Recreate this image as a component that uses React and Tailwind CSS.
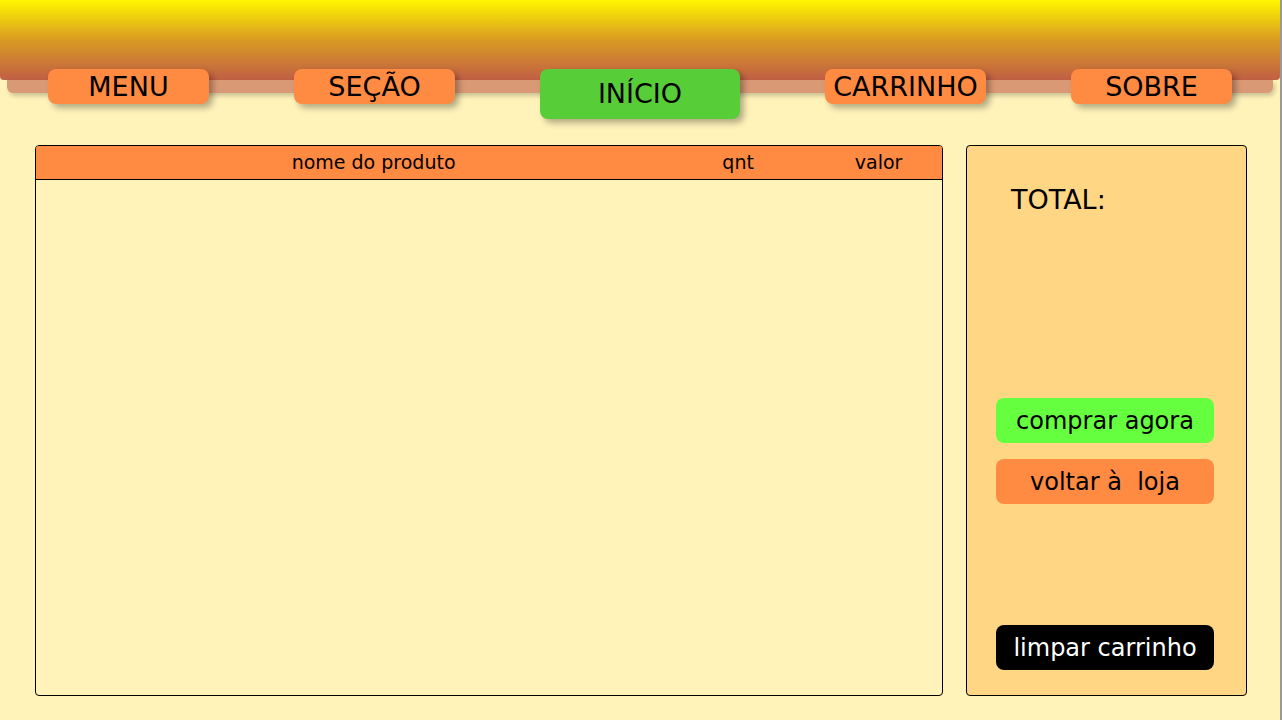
const links = [
  { label: "MENU", href: "#menu" },
  { label: "SEÇÃO", href: "#secao" },
  { label: "INÍCIO", href: "#inicio", home: true },
  { label: "CARRINHO", href: "#carrinho" },
  { label: "SOBRE", href: "#sobre" },
];

function NavLink({ label, href, home }) {
  const look = home ? "h-[50px] w-[200px] bg-[#57cd38]" : "h-[35px] w-[161px] bg-[#ff8a42]";
  return (
    <a
      href={href}
      className={`${look} flex items-center justify-center rounded-lg text-[27px] leading-8 shadow-[4px_4px_6px_rgba(0,0,0,0.3)]`}
    >
      {label}
    </a>
  );
}

function Header() {
  return (
    <header>
      <div className="h-20 rounded-b bg-linear-to-b/srgb from-[#fff700] via-[#d99a22] to-[#c05f45]" />
      <div className="mx-[7px] h-[13px] rounded-b-md bg-[#da9975] shadow-[2px_3px_4px_rgba(0,0,0,0.2)]" />
      <nav className="relative -mt-6 flex items-start justify-between px-12">
        {links.map((link) => (
          <NavLink key={link.label} {...link} />
        ))}
      </nav>
    </header>
  );
}

function CartTable() {
  return (
    <section className="flex-1 overflow-hidden rounded border border-black">
      <table className="w-full table-fixed border-collapse">
        <thead>
          <tr className="h-[33px] border-b border-black bg-[#ff8a42] text-[19px] leading-6">
            <th scope="col" className="w-[69%] pl-[50px] font-normal">nome do produto</th>
            <th scope="col" className="w-[17%] font-normal">qnt</th>
            <th scope="col" className="w-[14%] font-normal">valor</th>
          </tr>
        </thead>
        <tbody />
      </table>
    </section>
  );
}

function Summary() {
  const button = "h-[45px] w-full shrink-0 cursor-pointer rounded-lg text-2xl leading-7 whitespace-pre";
  return (
    <aside className="flex w-[281px] shrink-0 flex-col rounded border border-black bg-[#fed684] pt-[38px] pr-8 pb-[25px] pl-[29px]">
      <h2 className="pl-[15px] text-[27px] leading-8">TOTAL:</h2>
      <div className="mt-[182px] mb-6 flex flex-col gap-4">
        <button type="button" className={`${button} bg-[#66ff40]`}>comprar agora</button>
        <button type="button" className={`${button} bg-[#ff8a42]`}>{"voltar à  loja"}</button>
      </div>
      <button type="button" className={`${button} mt-auto bg-black text-white`}>limpar carrinho</button>
    </aside>
  );
}

export default function App() {
  return (
    <div className="flex min-h-screen flex-col border-r-2 border-[#999999] bg-[#fff3ba] font-['DejaVu_Sans',sans-serif] text-black">
      <Header />
      <main className="mt-[26px] flex flex-1 gap-[23px] pr-[33px] pb-6 pl-[35px]">
        <CartTable />
        <Summary />
      </main>
    </div>
  );
}
